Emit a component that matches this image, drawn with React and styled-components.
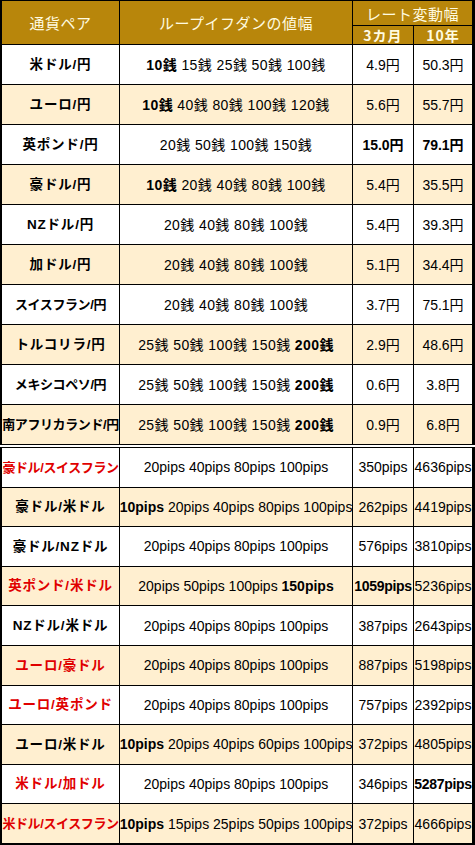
import React from "react";
import styled, { createGlobalStyle } from "styled-components";

const Global = createGlobalStyle`
  html, body { margin: 0; padding: 0; background: #fff; }
  * { box-sizing: border-box; }
`;

const GOLD = "#B8860B";
const CREAM = "#FFEFD0";
const RED = "#E00000";
const FONT = `"Liberation Sans", "Noto Sans CJK JP", sans-serif`;

const Sheet = styled.div`
  width: 475px;
  display: flex;
  flex-direction: column;
  gap: 2px;
  background: #fff;
  font-family: ${FONT};
`;

const Section = styled.div`
  display: grid;
  grid-template-columns: 117px 232px 60px 58px;
  grid-template-rows: ${(p) => p.$rows};
  gap: 1px;
  background: #000;
  padding: ${(p) => p.$pad};
`;

const HeadCell = styled.div`
  background: ${GOLD};
  color: #fffbe0;
  font-family: "Noto Sans CJK JP", sans-serif;
  font-size: ${(p) => (p.$sub ? "14px" : "15px")};
  font-weight: ${(p) => (p.$sub ? 700 : 400)};
  letter-spacing: ${(p) => (p.$sub ? "1px" : "0.5px")};
  display: flex;
  align-items: center;
  justify-content: center;
  white-space: nowrap;
  grid-row: ${(p) => (p.$rowSpan ? `span ${p.$rowSpan}` : "auto")};
  grid-column: ${(p) => (p.$colSpan ? `span ${p.$colSpan}` : "auto")};
  line-height: 1;
`;

const Cell = styled.div`
  background: ${(p) => (p.$alt ? CREAM : "#fff")};
  color: #000;
  display: flex;
  align-items: center;
  justify-content: center;
  white-space: nowrap;
  font-size: 14px;
  line-height: 1;
  letter-spacing: ${(p) => (p.$tight ? "-0.3px" : p.$loose ? "0.4px" : "0")};
  font-weight: ${(p) => (p.$bold ? 700 : 400)};
`;

const Label = styled(Cell)`
  font-family: "Liberation Sans", "Noto Sans CJK JP", sans-serif;
  font-size: ${(p) => (p.$long ? "13px" : "13.5px")};
  font-weight: 700;
  color: ${(p) => (p.$red ? RED : "#000")};
  letter-spacing: ${(p) => (p.$long ? "-0.4px" : "0.8px")};
`;

const Text = styled.span`
  white-space: pre;
`;

const B = styled.b`
  font-weight: 700;
`;

const Range = ({ items, unit, bold }) => (
  <Text>
    {items.map((v, i) => {
      const txt = `${v}${unit}`;
      return (
        <React.Fragment key={i}>
          {i > 0 ? " " : ""}
          {bold.includes(v) ? <B>{txt}</B> : txt}
        </React.Fragment>
      );
    })}
  </Text>
);

const yen = [
  ["米ドル/円", [10, 15, 25, 50, 100], [10], "4.9円", "50.3円"],
  ["ユーロ/円", [10, 40, 80, 100, 120], [10], "5.6円", "55.7円"],
  ["英ポンド/円", [20, 50, 100, 150], [], "15.0円", "79.1円", true, true],
  ["豪ドル/円", [10, 20, 40, 80, 100], [10], "5.4円", "35.5円"],
  ["NZドル/円", [20, 40, 80, 100], [], "5.4円", "39.3円"],
  ["加ドル/円", [20, 40, 80, 100], [], "5.1円", "34.4円"],
  ["スイスフラン/円", [20, 40, 80, 100], [], "3.7円", "75.1円"],
  ["トルコリラ/円", [25, 50, 100, 150, 200], [200], "2.9円", "48.6円"],
  ["メキシコペソ/円", [25, 50, 100, 150, 200], [200], "0.6円", "3.8円"],
  ["南アフリカランド/円", [25, 50, 100, 150, 200], [200], "0.9円", "6.8円"],
];

const pips = [
  ["豪ドル/スイスフラン", true, [20, 40, 80, 100], [], "350pips", "4636pips"],
  ["豪ドル/米ドル", false, [10, 20, 40, 80, 100], [10], "262pips", "4419pips"],
  ["豪ドル/NZドル", false, [20, 40, 80, 100], [], "576pips", "3810pips"],
  ["英ポンド/米ドル", true, [20, 50, 100, 150], [150], "1059pips", "5236pips", true, false],
  ["NZドル/米ドル", false, [20, 40, 80, 100], [], "387pips", "2643pips"],
  ["ユーロ/豪ドル", true, [20, 40, 80, 100], [], "887pips", "5198pips"],
  ["ユーロ/英ポンド", true, [20, 40, 80, 100], [], "757pips", "2392pips"],
  ["ユーロ/米ドル", false, [10, 20, 40, 60, 100], [10], "372pips", "4805pips"],
  ["米ドル/加ドル", true, [20, 40, 80, 100], [], "346pips", "5287pips", false, true],
  ["米ドル/スイスフラン", true, [10, 15, 25, 50, 100], [10], "372pips", "4666pips"],
];

export default function App() {
  return (
    <>
      <Global />
      <Sheet>
        <Section $rows="24px 18px repeat(10, 39px)" $pad="1px 3px 1px 2px">
          <HeadCell $rowSpan={2}>通貨ペア</HeadCell>
          <HeadCell $rowSpan={2}>ループイフダンの値幅</HeadCell>
          <HeadCell $colSpan={2}>レート変動幅</HeadCell>
          <HeadCell $sub>3カ月</HeadCell>
          <HeadCell $sub>10年</HeadCell>
          {yen.map(([name, items, bold, m3, y10, b3, b10], i) => (
            <React.Fragment key={name}>
              <Label $alt={i % 2 === 1} $long={name.length >= 8}>{name}</Label>
              <Cell $alt={i % 2 === 1} $loose>
                <Range items={items} unit="銭" bold={bold} />
              </Cell>
              <Cell $alt={i % 2 === 1} $bold={b3}>{m3}</Cell>
              <Cell $alt={i % 2 === 1} $bold={b10}>{y10}</Cell>
            </React.Fragment>
          ))}
        </Section>
        <Section $rows="repeat(10, 38.6px)" $pad="1px 3px 2px 2px">
          {pips.map(([name, red, items, bold, m3, y10, b3, b10], i) => (
            <React.Fragment key={name}>
              <Label $alt={i % 2 === 1} $red={red} $long={name.length >= 9}>{name}</Label>
              <Cell $alt={i % 2 === 1}>
                <Range items={items} unit="pips" bold={bold} />
              </Cell>
              <Cell $alt={i % 2 === 1} $bold={b3} $tight={b3}>{m3}</Cell>
              <Cell $alt={i % 2 === 1} $bold={b10} $tight={b10}>{y10}</Cell>
            </React.Fragment>
          ))}
        </Section>
      </Sheet>
    </>
  );
}
